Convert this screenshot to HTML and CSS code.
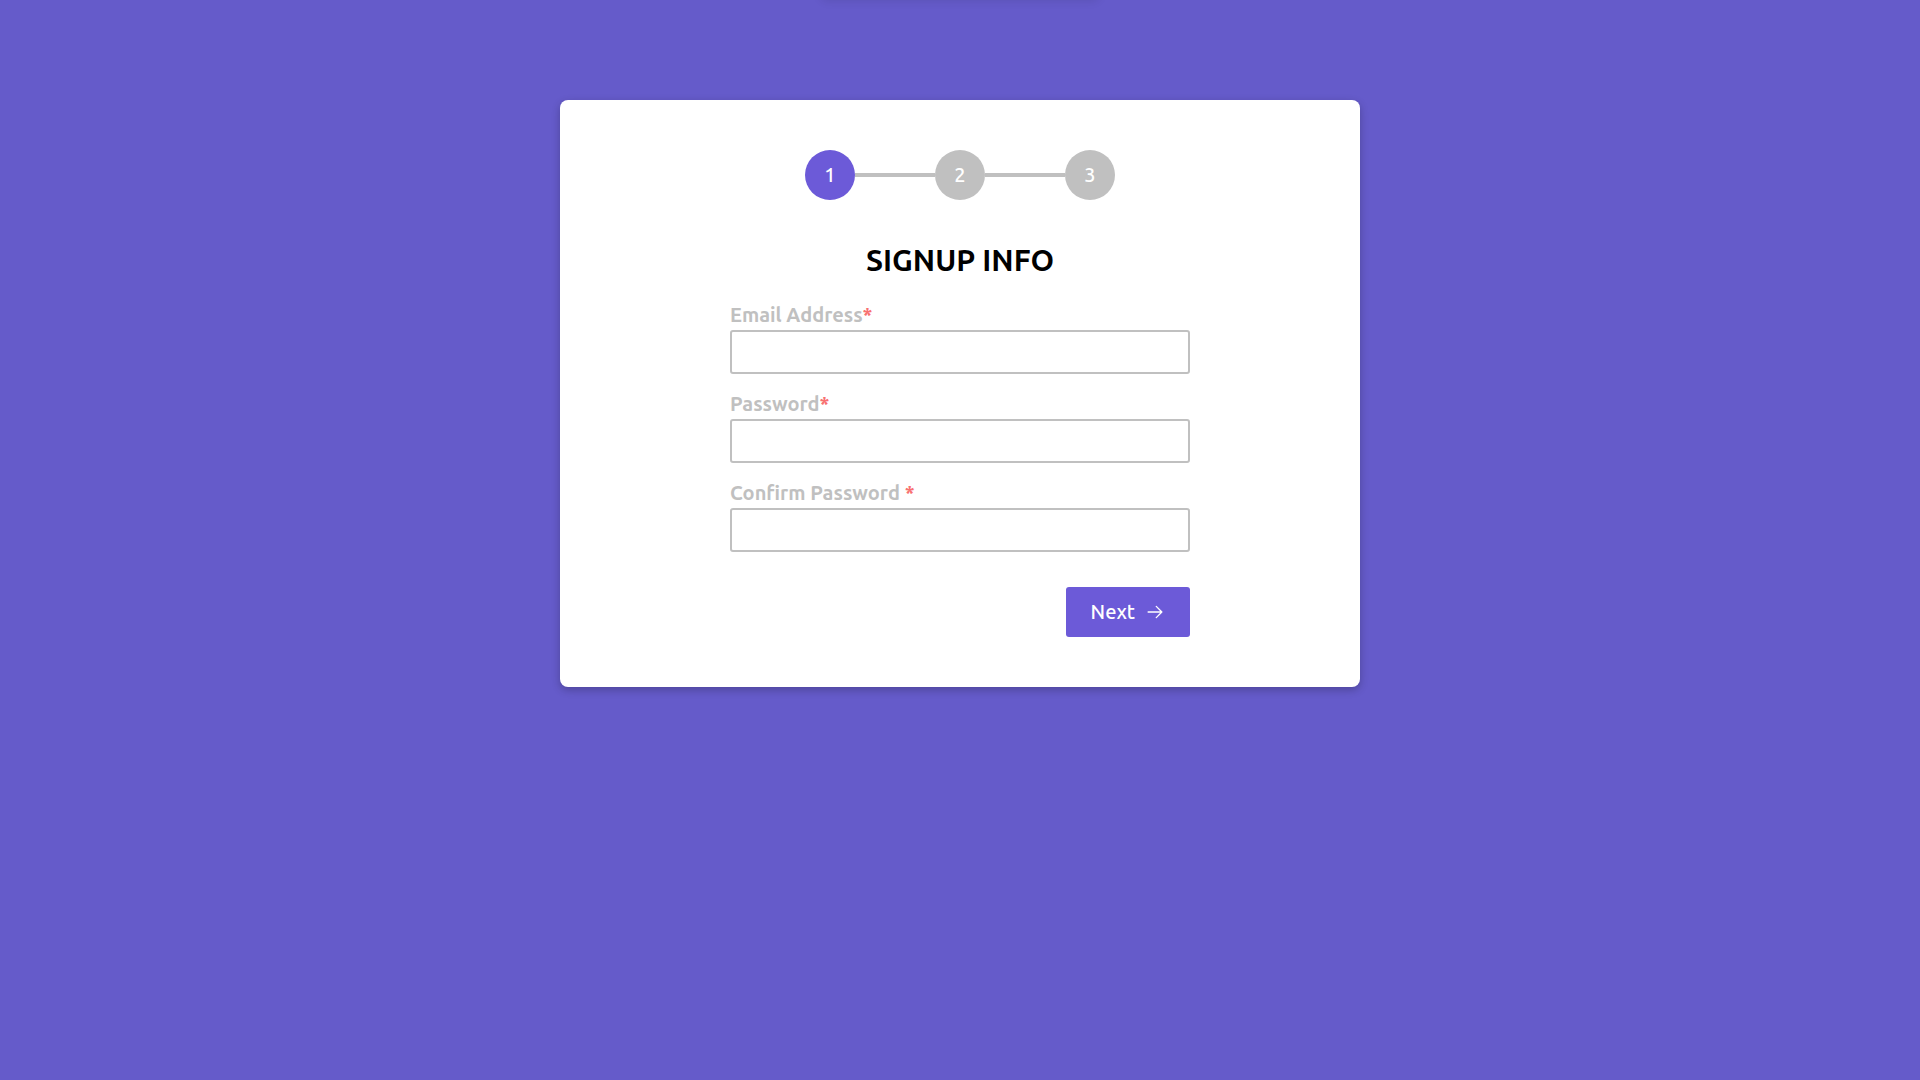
FILE: index.html
```html
<!DOCTYPE html>
<html lang="en">
<head>
<meta charset="utf-8">
<meta name="viewport" content="width=device-width, initial-scale=1">
<title>Signup</title>
<link rel="stylesheet" href="styles.css">
</head>
<body>
<div class="toast" aria-hidden="true"></div>
<main class="card">
  <ol class="steps">
    <li class="step step-active">1</li>
    <li class="step">2</li>
    <li class="step">3</li>
  </ol>
  <form class="form">
    <h1 class="title">SIGNUP INFO</h1>
    <div class="field">
      <label class="label" for="email">Email Address<span class="required">*</span></label>
      <input class="input" id="email" type="email">
    </div>
    <div class="field">
      <label class="label" for="password">Password<span class="required">*</span></label>
      <input class="input" id="password" type="password">
    </div>
    <div class="field">
      <label class="label" for="confirm">Confirm Password <span class="required">*</span></label>
      <input class="input" id="confirm" type="password">
    </div>
    <button class="next" type="button">Next
      <svg class="arrow" viewBox="0 0 256 256" width="20" height="20" fill="none" stroke="currentColor" stroke-width="17" stroke-linecap="round" stroke-linejoin="round" aria-hidden="true"><path d="M40 128H216M144 56l72 72-72 72"/></svg>
    </button>
  </form>
</main>
</body>
</html>
```
FILE: styles.css
```css
* {
  box-sizing: border-box;
}

body {
  margin: 0;
  padding: 100px 20px;
  min-height: 100vh;
  background: #655bca;
  font-family: Ubuntu, "Noto Sans", sans-serif;
  font-size: 20px;
  font-weight: 500;
  line-height: 24px;
}

.toast {
  position: fixed;
  bottom: 100%;
  left: 50%;
  width: 280px;
  height: 48px;
  margin-left: -140px;
  border-radius: 8px;
  box-shadow: 0 1px 10px rgba(0, 0, 0, 0.1);
}

.card {
  max-width: 800px;
  margin: 0 auto;
  padding: 50px 20px;
  border-radius: 8px;
  background: #fff;
  box-shadow: 0 3px 8px rgba(0, 0, 0, 0.24);
}

.steps {
  display: flex;
  justify-content: center;
  margin: 0 0 40px;
  padding: 0;
  list-style: none;
}

.step {
  position: relative;
  width: 50px;
  height: 50px;
  border-radius: 50%;
  background: #c0c0c0;
  color: #fff;
  line-height: 50px;
  text-align: center;
}

.step + .step {
  margin-left: 80px;
}

.step + .step::before {
  content: "";
  position: absolute;
  top: 23px;
  right: 100%;
  width: 80px;
  height: 4px;
  background: #c0c0c0;
}

.step-active {
  background: #6c5ad8;
}

.form {
  display: flex;
  flex-direction: column;
  max-width: 460px;
  margin: 0 auto;
}

.title {
  margin: 0 0 23px;
  color: #000;
  font-size: 30px;
  font-weight: 700;
  line-height: 40px;
  text-align: center;
}

.field {
  display: flex;
  flex-direction: column;
  gap: 3px;
  margin-bottom: 18px;
}

.label {
  color: #c0c0c0;
  font-weight: 600;
}

.required {
  color: #f87171;
}

.input {
  width: 100%;
  height: 44px;
  padding: 8px;
  border: 2px solid #c0c0c0;
  border-radius: 3px;
  background: #fff;
  font: inherit;
}

.next {
  display: flex;
  align-items: center;
  align-self: flex-end;
  gap: 10px;
  height: 50px;
  margin-top: 17px;
  padding: 0 25px;
  border: 0;
  border-radius: 3px;
  background: #6c5ad8;
  color: #fff;
  font: inherit;
  cursor: pointer;
}
```
